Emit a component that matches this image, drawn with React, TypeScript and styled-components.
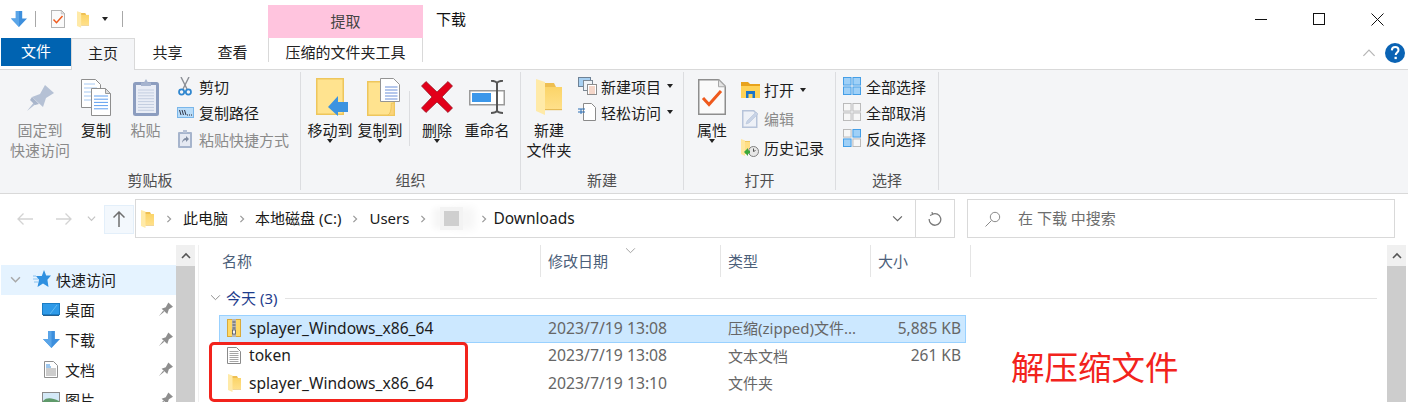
import React from 'react'
import styled, { createGlobalStyle } from 'styled-components'

const GlobalStyle = createGlobalStyle`
  html, body { margin: 0; padding: 0; background: #fff; }
  body {
    font-family: "Noto Sans", "Noto Sans CJK SC", sans-serif;
    font-size: 15px;
    color: #1c1c1c;
  }
  * { box-sizing: border-box; }
`

const Page = styled.div`
  position: relative;
  width: 1408px;
  height: 402px;
  overflow: hidden;
  background: #fff;
`

/* ---------- title bar ---------- */
const TitleBar = styled.div`
  display: flex;
  height: 38px;
  align-items: center;
`
const QuickAccess = styled.div`
  display: flex;
  align-items: center;
  width: 268px;
  padding-left: 11px;
  height: 100%;
`
const QuickSep = styled.span<{ $left: number; $right: number }>`
  width: 1px;
  height: 16px;
  margin: 0 ${p => p.$right}px 0 ${p => p.$left}px;
  background: #a8a8a8;
`
const QuickSlot = styled.span<{ $left: number }>`
  display: flex;
  margin-left: ${p => p.$left}px;
`
const ExtractTab = styled.div`
  align-self: flex-end;
  width: 155px;
  height: 33px;
  background: #ffc4de;
  color: #444;
  text-align: center;
  line-height: 32px;
`
const WindowTitle = styled.div`
  margin-left: 13px;
  line-height: 36px;
  color: #111;
`
const WindowButtons = styled.div`
  display: flex;
  margin-left: auto;
  padding-right: 24px;
  gap: 46px;
  align-items: center;
`

/* ---------- tabs ---------- */
const TabRow = styled.div`
  display: flex;
  height: 32px;
  border-bottom: 1px solid #d9d9d9;
  align-items: flex-start;
`
const FileTab = styled.div`
  width: 70px;
  height: 28px;
  margin-left: 1px;
  background: #0063b1;
  color: #fff;
  text-align: center;
  line-height: 26px;
`
const Tab = styled.div<{ $active?: boolean }>`
  width: ${p => (p.$active ? 64 : 65)}px;
  height: ${p => (p.$active ? 32 : 30)}px;
  line-height: 28px;
  text-align: center;
  color: #222;
  ${p =>
    p.$active &&
    `background: #f4f5f7;
     border: 1px solid #d9d9d9;
     border-bottom: none;
     position: relative;`}
`
const ContextTab = styled.div`
  width: 155px;
  height: 24px;
  margin-left: 3px;
  border-left: 1px solid #d9d9d9;
  border-right: 1px solid #d9d9d9;
  line-height: 28px;
  text-align: center;
  color: #222;
  white-space: nowrap;
`
const RibbonTools = styled.div`
  display: flex;
  align-items: center;
  margin-left: auto;
  height: 100%;
  gap: 9px;
  padding: 0 3px 2px 0;
`

/* ---------- ribbon ---------- */
const Ribbon = styled.div`
  display: flex;
  height: 124px;
  padding: 2px 0 3px;
  background: #f4f5f7;
  border-bottom: 1px solid #d9d9d9;
`
const Group = styled.section<{ $w: number }>`
  display: flex;
  flex-direction: column;
  width: ${p => p.$w}px;
  border-right: 1px solid #dcdde0;
`
const GroupBody = styled.div<{ $pad?: number }>`
  display: flex;
  flex: 1;
  align-items: flex-start;
  padding-left: ${p => p.$pad || 0}px;
`
const GroupLabel = styled.div`
  height: 23px;
  padding-top: 3px;
  line-height: 20px;
  text-align: center;
  color: #4f4f4f;
`
const LargeButton = styled.div<{ $w: number; $off?: boolean }>`
  display: flex;
  flex-direction: column;
  align-items: center;
  width: ${p => p.$w}px;
  color: ${p => (p.$off ? '#8a8a8a' : '#1c1c1c')};
  text-align: center;
`
const LargeIcon = styled.div<{ $shift?: number }>`
  display: flex;
  align-items: center;
  justify-content: center;
  height: 38px;
  margin: 6px 0 4px ${p => p.$shift || 0}px;
`
const LargeText = styled.div`
  line-height: 20px;
  white-space: nowrap;
`
const Caret = styled.span<{ $inline?: boolean }>`
  display: block;
  width: 0;
  height: 0;
  border: 3.5px solid transparent;
  border-top: 4px solid #222;
  border-bottom: none;
  margin: ${p => (p.$inline ? '0 0 0 2px' : '-1px 0 0')};
`
const GroupDivider = styled.span`
  width: 1px;
  height: 55px;
  margin: 19px 2px 0 4px;
  background: #dcdde0;
`
const SmallColumn = styled.div<{ $rowH: number; $top: number }>`
  display: grid;
  grid-auto-rows: ${p => p.$rowH}px;
  padding-top: ${p => p.$top}px;
`
const SmallRow = styled.div<{ $off?: boolean }>`
  display: flex;
  align-items: center;
  gap: 4px;
  color: ${p => (p.$off ? '#8a8a8a' : '#1c1c1c')};
  white-space: nowrap;
`
const SmallIcon = styled.span`
  display: flex;
  width: 20px;
  justify-content: center;
  align-items: center;
`

/* ---------- address bar ---------- */
const AddressRow = styled.div`
  display: flex;
  height: 51px;
  padding-top: 5px;
  align-items: flex-start;
`
const NavArrows = styled.div`
  display: flex;
  align-items: center;
  width: 135px;
  height: 39px;
`
const NavSlot = styled.span<{ $w: number }>`
  display: flex;
  justify-content: center;
  width: ${p => p.$w}px;
`
const UpButton = styled.span`
  display: flex;
  align-items: center;
  justify-content: center;
  width: 30px;
  height: 29px;
  margin-top: 1px;
  background: #f3f8fd;
  border: 1px solid #e3effa;
`
const AddressBox = styled.div`
  display: flex;
  align-items: center;
  width: 820px;
  height: 39px;
  border: 1px solid #d9d9d9;
  padding-left: 5px;
`
const Crumb = styled.span<{ $big?: boolean }>`
  margin-top: -2px;
  color: #1a1a1a;
  white-space: pre;
  ${p => p.$big && 'font-size: 15.5px;'}
`
const CrumbSep = styled.span<{ $w: number }>`
  display: flex;
  justify-content: center;
  width: ${p => p.$w}px;
`
const Redacted = styled.span`
  display: block;
  width: 15px;
  height: 15px;
  margin: 0 15px 0 8px;
  background: #cfcfcf;
  box-shadow: 0 0 0 4px #f3f3f3, 12px 0 8px 4px #f6f6f6, -8px 0 6px 3px #f6f6f6;
`
const AddressTail = styled.div`
  display: flex;
  align-items: center;
  margin-left: auto;
  height: 100%;
`
const RefreshSlot = styled.span`
  display: flex;
  align-items: center;
  justify-content: center;
  width: 39px;
  height: 100%;
  margin-left: 12px;
  border-left: 1px solid #d9d9d9;
`
const SearchBox = styled.div`
  display: flex;
  align-items: center;
  width: 428px;
  height: 39px;
  margin-left: 12px;
  padding-left: 17px;
  gap: 17px;
  border: 1px solid #d9d9d9;
  & > span:last-child {
    color: #6d6d6d;
  }
`

/* ---------- body ---------- */
const Body = styled.div`
  display: flex;
  height: 157px;
  overflow: hidden;
`
const Nav = styled.nav`
  width: 176px;
  padding: 20px 0 0 1px;
`
const NavRow = styled.div<{ $active?: boolean }>`
  display: flex;
  align-items: center;
  height: 30px;
  padding: 0 0 2px ${p => (p.$active ? 8 : 41)}px;
  background: ${p => (p.$active ? '#e5f3ff' : 'transparent')};
  color: #1c1c1c;
`
const NavIcon = styled.span<{ $w: number; $gap: number }>`
  display: flex;
  justify-content: center;
  width: ${p => p.$w}px;
  margin-right: ${p => p.$gap}px;
`
const PinSlot = styled.span`
  display: flex;
  margin-left: auto;
  margin-right: 3px;
`
const Scrollbar = styled.div<{ $right?: number }>`
  display: flex;
  flex-direction: column;
  width: 19px;
  margin-right: ${p => p.$right || 0}px;
  background: #cdcdcd;
`
const ScrollButton = styled.div`
  display: flex;
  height: 21px;
  align-items: center;
  justify-content: center;
  background: #f0f0f0;
`
const Main = styled.main`
  flex: 1;
  margin: 0 0 0 3px;
  border-left: 1px solid #f0f0f0;
`
const FileHead = styled.div`
  position: relative;
  display: grid;
  grid-template-columns: 342px 180px 150px 100px;
  width: 772px;
  height: 32px;
`
const HeadCell = styled.div<{ $pad: number }>`
  padding-left: ${p => p.$pad}px;
  line-height: 32px;
  color: #4c607a;
  border-right: 1px solid #e5e5e5;
`
const SortMark = styled.span`
  position: absolute;
  left: 426px;
  top: 0;
  display: flex;
`
const FileGroup = styled.div`
  display: flex;
  align-items: center;
  height: 24px;
  margin: 8px 10px 6px 0;
  padding-left: 11px;
  color: #1e3c8c;
`
const GroupName = styled.span`
  margin: 0 8px 0 5px;
  white-space: nowrap;
`
const GroupLine = styled.span`
  flex: 1;
  height: 1px;
  margin-top: 2px;
  background: #e3e3e3;
`
const FileRow = styled.div<{ $selected?: boolean }>`
  display: grid;
  grid-template-columns: 321px 180px 150px 90px;
  align-items: center;
  width: 747px;
  height: 27.5px;
  margin-left: 20px;
  padding-bottom: 2px;
  border: 1px solid ${p => (p.$selected ? '#99d1ff' : 'transparent')};
  background: ${p => (p.$selected ? '#cce8ff' : 'transparent')};
  color: #666;
  white-space: nowrap;
`
const NameCell = styled.div`
  display: flex;
  align-items: center;
  color: #1c1c1c;
  font-size: 15.6px;
`
const FileIcon = styled.span`
  display: flex;
  justify-content: center;
  width: 14px;
  margin: 0 8px 0 7px;
`
const InfoCell = styled.div<{ $big?: boolean }>`
  padding-left: 7px;
  ${p => p.$big && 'font-size: 15.75px;'}
`
const SizeCell = styled.div`
  font-size: 15.5px;
  text-align: right;
`

/* ---------- screenshot annotation ---------- */
const RedFrame = styled.div`
  position: absolute;
  left: 209px;
  top: 342px;
  width: 259px;
  height: 60px;
  border: 3px solid #f2231c;
  border-radius: 5px;
`
const RedNote = styled.div`
  position: absolute;
  left: 1011px;
  top: 343px;
  font-size: 33.5px;
  line-height: 48px;
  color: #f2231c;
  white-space: nowrap;
`

/* ---------- icons ---------- */
const Chevron = ({ dir = 'right', size = 8, color = '#9a9a9a', width = 1.2 }: { dir?: 'right' | 'down' | 'up'; size?: number; color?: string; width?: number }) => {
  const d = dir === 'right' ? 'M3 1l4 4-4 4' : dir === 'down' ? 'M1 3l4 4 4-4' : 'M1 7l4-4 4 4'
  return (
    <svg width={size} height={size} viewBox="0 0 10 10">
      <path d={d} fill="none" stroke={color} strokeWidth={(width * 10) / size} />
    </svg>
  )
}

const DownArrow = ({ size = 16 }: { size?: number }) => (
  <svg width={size} height={size} viewBox="0 0 16 16">
    <path d="M4.8 0h6.4v7.5H16L8 16 0 7.5h4.8z" fill="#3d8fdd" />
    <path d="M4.8 0h3.2v16L0 7.5h4.8z" fill="#5aa5e8" />
  </svg>
)

const Folder = ({ w = 13, h = 18 }: { w?: number; h?: number }) => (
  <svg width={w} height={h} viewBox="0 0 13 18">
    <defs>
      <linearGradient id="folderFront" x1="0" y1="0" x2="0" y2="1">
        <stop offset="0" stopColor="#fbd468" />
        <stop offset="1" stopColor="#ffe08a" />
      </linearGradient>
    </defs>
    <path d="M3 2h6l1 2v11H3z" fill="#eebf52" />
    <path d="M4 4h9v11H4z" fill="url(#folderFront)" />
    <path d="M0 0l4.5 1.5V18L0 16z" fill="#ffeaa8" />
    <path d="M4.5 15H13v.6H4.5z" fill="#e6bb56" />
  </svg>
)

const CheckDoc = ({ w = 14, h = 18 }: { w?: number; h?: number }) => (
  <svg width={w} height={h} viewBox="0 0 28 36">
    <path d="M.75.75h20l6.5 6.5v28H.75z" fill="#fafafa" stroke="#8e8e8e" strokeWidth="1.5" />
    <path d="M20.5.75v7h7z" fill="#e4e4e4" stroke="#a8a8a8" />
    <path d="M5 19l6 6.5L23 12" fill="none" stroke="#ef5a1d" strokeWidth="3" />
  </svg>
)

const Pin = () => (
  <svg width="27" height="27" viewBox="0 0 27 27">
    <path d="M0 27l8-10 2 2zM5 13l8-3 5-9 9 8-8 5-3 9z" fill="#b5c1d5" />
    <path d="M5 13l5 5 2 2-4 1-5-5z" fill="#a9b6cc" />
  </svg>
)

const lines = (x: number, y0: number, w: number, n: number, step: number) =>
  Array.from({ length: n }, (_, i) => `M${x} ${y0 + i * step}h${w}`).join('')

const CopyIcon = () => (
  <svg width="30" height="37" viewBox="0 0 30 37">
    <path d="M.5.5h14l5 5v23H.5z" fill="#fff" stroke="#8e8e8e" />
    <path d="M3 5h11M3 9h13M3 13h13M3 17h13M3 21h13" stroke="#a5c8f2" />
    <path d="M10.5 9.5h14l5 5v22h-19z" fill="#fff" stroke="#8e8e8e" />
    <path d="M24.5 9.5v5h5z" fill="#ddd" stroke="#9a9a9a" />
    <path d={lines(13, 17, 14, 5, 3.2)} stroke="#5f9ff0" />
  </svg>
)

const PasteIcon = () => (
  <svg width="26" height="37" viewBox="0 0 26 37">
    <rect y="3" width="26" height="34" rx="2.5" fill="#8c9dbf" />
    <rect x="3" y="6" width="20" height="28" fill="#e9edf6" />
    <path d={lines(5, 11, 16, 8, 2.9)} stroke="#c4cee0" />
    <path d="M8 7V3.5h3L13 0l2 3.5h3V7z" fill="#a6b4cf" />
  </svg>
)

const Scissors = () => (
  <svg width="14" height="19" viewBox="0 0 14 19">
    <path d="M3 0l6 12M11 0L5 12" stroke="#8b8f96" strokeWidth="1.4" fill="none" />
    <circle cx="3.6" cy="15" r="2.6" fill="none" stroke="#2f86cf" strokeWidth="1.7" />
    <circle cx="10.4" cy="15" r="2.6" fill="none" stroke="#2f86cf" strokeWidth="1.7" />
  </svg>
)

const PathIcon = () => (
  <svg width="17" height="11" viewBox="0 0 17 11">
    <rect x=".5" y=".5" width="16" height="10" fill="#b9dcf8" stroke="#79b6ea" />
    <path d="M2.5 3l1.5 5M5 3l1.5 5M7.500 3l1.500 5" stroke="#223" strokeWidth=".9" />
    <path d="M10 8h1M12 8h1M14 8h1" stroke="#223" />
  </svg>
)

const ShortcutIcon = () => (
  <svg width="14" height="18" viewBox="0 0 14 18">
    <rect y="2" width="14" height="16" rx="1" fill="#a6b4cc" />
    <rect x="2" y="4" width="10" height="12" fill="#e5e9f2" />
    <path d="M5 0h4v3H5z" fill="#b7c2d6" />
    <path d="M4 13c0-3 2-5 4-5V6l3 3-3 3v-2c-2 0-3 1-4 3z" fill="#7f8ba1" />
  </svg>
)

const MoveToIcon = () => (
  <svg width="33" height="38" viewBox="0 0 33 38">
    <path d="M.75.75h26.5v35.5H.75z" fill="#ffe38f" stroke="#eec65c" strokeWidth="1.5" />
    <path d="M12 29l10-11v6h10v10H22v4z" fill="#3c93e0" />
  </svg>
)

const CopyToIcon = () => (
  <svg width="33" height="38" viewBox="0 0 33 38">
    <path d="M.75 3.750h26.500v33.500H.75z" fill="#ffe38f" stroke="#eec65c" strokeWidth="1.500" />
    <path d="M27.250 25v12.250h-6.500c3.500-2 3.500-8 3.500-12z" fill="#fbd37a" stroke="#eec65c" />
    <path d="M13.500.5h13l6 6v17h-19z" fill="#fff" stroke="#949494" />
    <path d="M18 8.500h12.500v14H18z" fill="#fff" />
    <path d={lines(18, 9, 12.500, 5, 3)} stroke="#6a8fd8" />
  </svg>
)

const DeleteIcon = () => (
  <svg width="32" height="32" viewBox="0 0 32 32">
    <path d="M5 .5L16 11 27 .5 31.500 5 21 16l10.500 11-4.500 4.500L16 21 5 31.500.5 27 11 16 .5 5z" fill="#e2001a" stroke="#8d1320" strokeWidth=".7" />
  </svg>
)

const RenameIcon = () => (
  <svg width="36" height="34" viewBox="0 0 36 34">
    <path d="M.75 10.750h34.500v14H.75z" fill="#fff" stroke="#9a9a9a" strokeWidth="1.500" />
    <rect x="3" y="13" width="19" height="9" fill="#3b97ea" />
    <path d="M28 2v30M22 .8c3 0 5 .5 6 2.200 1-1.700 3-2.200 6-2.200M22 33c3 0 5-.5 6-2.200 1 1.700 3 2.200 6 2.200" fill="none" stroke="#555" strokeWidth="2" />
  </svg>
)

const NewItemIcon = () => (
  <svg width="19" height="18" viewBox="0 0 19 18">
    <rect x=".5" y=".5" width="12" height="9" fill="#a7d0f2" stroke="#6e8296" />
    <rect x="5.500" y="3.500" width="9" height="10" fill="#eef3f8" stroke="#7d8a96" />
    <rect x="9.500" y="7.500" width="9" height="10" fill="#fff" stroke="#8d8d8d" />
    <path d="M11 10h6M11 12h6M11 14h6M11 16h6" stroke="#e39a7a" strokeWidth=".8" />
  </svg>
)

const EasyAccessIcon = () => (
  <svg width="18" height="18" viewBox="0 0 18 18">
    <path d="M5.500.5h8l4 4v13h-12z" fill="#fff" stroke="#8a8a8a" />
    <path d="M0 6h7M0 9h7M3 6v5" stroke="#2a6fb5" />
  </svg>
)

const OpenIcon = () => (
  <svg width="19" height="16" viewBox="0 0 19 16">
    <path d="M0 2V0h7l2 2h10v4H0z" fill="#e8a21c" />
    <path d="M0 4h19v12H0z" fill="#ffd257" />
    <path d="M5 16V9h9v7h-2.500v-4h-4v4z" fill="#1c75c9" />
  </svg>
)

const EditIcon = () => (
  <svg width="17" height="18" viewBox="0 0 17 18">
    <path d="M.75.75h11l3 3v13.500h-14z" fill="#eef1f7" stroke="#b7c4da" strokeWidth="1.500" />
    <path d="M4 14l1-3 9-9 2 2-9 9z" fill="#c8d3e6" stroke="#b7c4da" strokeWidth=".6" />
  </svg>
)

const HistoryIcon = () => (
  <svg width="18" height="18" viewBox="0 0 18 18">
    <path d="M3 2h6v13H3z" fill="#f0c75e" />
    <path d="M0 0l4 1.500V17l-4-2z" fill="#ffe79f" />
    <path d="M4 3h5v11H4z" fill="#ffdf85" />
    <circle cx="12.500" cy="12.500" r="5" fill="#e7e7e7" stroke="#7f7f7f" />
    <path d="M12.500 9.500v3l2-1" stroke="#555" fill="none" />
    <path d="M3 13l4-4v2.500h2v3H7V17z" fill="#39a83b" />
  </svg>
)

const SelectGrid = ({ on }: { on: boolean[] }) => {
  const pos: [number, number][] = [[0.5, 0.5], [10.5, 0.5], [0.5, 10.5], [10.5, 10.5]]
  return (
    <svg width="18" height="18" viewBox="0 0 19 19">
      {pos.map(([x, y], i) => (
        <rect key={i} x={x} y={y} width="8" height="8" fill={on[i] ? '#9fd0f7' : '#f7f7f7'} stroke={on[i] ? '#3f9be6' : '#b8b8b8'} />
      ))}
    </svg>
  )
}

const StarIcon = () => (
  <svg width="18" height="18" viewBox="0 0 18 18">
    <path d="M11 0l2.200 5.500H18l-3.600 4.300 1.100 7.200-5.500-3.500L4.500 17 6 9.800 3 6h5.800z" fill="#2f90e0" />
    <path d="M0 6h3M0 9h5M1 12h4" stroke="#8ac2ef" />
  </svg>
)

const DesktopIcon = () => (
  <svg width="18" height="13" viewBox="0 0 18 13">
    <rect x=".5" y=".5" width="17" height="11" fill="#2f9ae8" stroke="#1a7cc4" />
    <path d="M8 11l7-9" stroke="#64bbf2" />
    <path d="M1 12.500h16" stroke="#275f8f" />
  </svg>
)

const DocsIcon = () => (
  <svg width="14" height="17" viewBox="0 0 14 17">
    <path d="M.5.5h9l4 4v12H.5z" fill="#fff" stroke="#8f8f8f" />
    <path d="M2 4h4M2 6h5" stroke="#3d8fdd" />
    <path d={lines(2, 8, 10, 4, 2)} stroke="#9a9a9a" />
  </svg>
)

const PictureIcon = () => (
  <svg width="18" height="14" viewBox="0 0 18 14">
    <rect x=".5" y=".5" width="17" height="13" fill="#d4e9f7" stroke="#8a8a8a" />
    <path d="M1 9c4-4 9-3 16 0v4H1z" fill="#5f9a6a" />
  </svg>
)

const PinSmall = () => (
  <svg width="14" height="14" viewBox="0 0 27 27">
    <path d="M0 27l8-10 2 2zM5 13l8-3 5-9 9 8-8 5-3 9z" fill="#8e8e8e" />
  </svg>
)

const ZipIcon = () => (
  <svg width="14" height="18" viewBox="0 0 14 18">
    <rect x=".5" y=".5" width="13" height="17" fill="#ffd964" stroke="#d9a93a" />
    <rect x="5" y="0" width="4" height="18" fill="#b7b7b7" />
    <path d="M5.500 3h3M5.500 6h3M5.500 9h3" stroke="#555" />
    <rect x="5.500" y="11" width="3" height="4" fill="#f5f5f5" stroke="#555" strokeWidth=".8" />
  </svg>
)

const TextIcon = () => (
  <svg width="14" height="17" viewBox="0 0 14 17">
    <path d="M.5.5h9l4 4v12H.5z" fill="#fff" stroke="#8a8a8a" />
    <path d={lines(2.5, 4.5, 9, 6, 2)} stroke="#8f8f8f" strokeWidth=".8" />
  </svg>
)

const HorizontalArrow = ({ right }: { right?: boolean }) => (
  <svg width="16" height="12" viewBox="0 0 16 12">
    <path
      d={right ? 'M15 6H0M9.500.5L15 6l-5.500 5.500' : 'M1 6h15M6.500.5L1 6l5.500 5.500'}
      fill="none"
      stroke="#d3d3d3"
      strokeWidth="1.300"
    />
  </svg>
)

const UpArrow = () => (
  <svg width="12" height="16" viewBox="0 0 12 16">
    <path d="M6 16V1M.5 6.500L6 1l5.500 5.500" fill="none" stroke="#6f6f6f" strokeWidth="1.500" />
  </svg>
)

const Refresh = () => (
  <svg width="14" height="14" viewBox="0 0 14 14">
    <path d="M4.500 2.200A5.800 5.800 0 1 1 1.200 7" fill="none" stroke="#7a7a7a" strokeWidth="1.300" />
    <path d="M4 0l.5 2.500L2 3.500" fill="none" stroke="#7a7a7a" strokeWidth="1.200" />
  </svg>
)

const SearchIcon = () => (
  <svg width="16" height="16" viewBox="0 0 16 16">
    <circle cx="10" cy="6" r="4.700" fill="none" stroke="#8a8a8a" />
    <path d="M6.500 9.500L.5 15.500" stroke="#8a8a8a" />
  </svg>
)

const HelpIcon = () => (
  <svg width="20" height="20" viewBox="0 0 20 20">
    <circle cx="10" cy="10" r="10" fill="#0a63b4" />
    <path d="M6.800 7.300C7 5 8.500 4 10.200 4c2 0 3.300 1.200 3.300 2.900 0 2.400-2.800 2.600-2.800 5" fill="none" stroke="#fff" strokeWidth="2" />
    <rect x="9.500" y="13.800" width="2.300" height="2.300" fill="#fff" />
  </svg>
)

const MinIcon = () => (
  <svg width="12" height="12" viewBox="0 0 12 12"><path d="M0 6.500h12" stroke="#111" /></svg>
)
const MaxIcon = () => (
  <svg width="12" height="12" viewBox="0 0 12 12"><rect x=".5" y=".5" width="11" height="11" fill="none" stroke="#111" /></svg>
)
const CloseIcon = () => (
  <svg width="13" height="13" viewBox="0 0 13 13"><path d="M.5.500l12 12M12.500.500l-12 12" stroke="#111" /></svg>
)

const files = [
  { icon: <ZipIcon />, name: 'splayer_Windows_x86_64', date: '2023/7/19 13:08', type: '压缩(zipped)文件...', size: '5,885 KB', selected: true },
  { icon: <TextIcon />, name: 'token', date: '2023/7/19 13:08', type: '文本文档', size: '261 KB' },
  { icon: <Folder />, name: 'splayer_Windows_x86_64', date: '2023/7/19 13:10', type: '文件夹', size: '' },
]

const navItems = [
  { icon: <DesktopIcon />, label: '桌面' },
  { icon: <DownArrow size={17} />, label: '下载' },
  { icon: <DocsIcon />, label: '文档' },
  { icon: <PictureIcon />, label: '图片' },
]

const App = () => (
  <Page>
    <GlobalStyle />
    <TitleBar>
      <QuickAccess>
        <DownArrow />
        <QuickSep $left={8} $right={15} />
        <CheckDoc />
        <QuickSlot $left={12}><Folder w={12} h={17} /></QuickSlot>
        <QuickSlot $left={13}><Caret /></QuickSlot>
        <QuickSep $left={14} $right={0} />
      </QuickAccess>
      <ExtractTab>提取</ExtractTab>
      <WindowTitle>下载</WindowTitle>
      <WindowButtons>
        <MinIcon />
        <MaxIcon />
        <CloseIcon />
      </WindowButtons>
    </TitleBar>

    <TabRow>
      <FileTab>文件</FileTab>
      <Tab $active>主页</Tab>
      <Tab>共享</Tab>
      <Tab>查看</Tab>
      <ContextTab>压缩的文件夹工具</ContextTab>
      <RibbonTools>
        <Chevron dir="up" size={14} color="#b5b5b5" width={1.2} />
        <HelpIcon />
      </RibbonTools>
    </TabRow>

    <Ribbon>
      <Group $w={301}>
        <GroupBody $pad={4}>
          <LargeButton $w={72} $off>
            <LargeIcon><Pin /></LargeIcon>
            <LargeText>固定到<br />快速访问</LargeText>
          </LargeButton>
          <LargeButton $w={40}>
            <LargeIcon><CopyIcon /></LargeIcon>
            <LargeText>复制</LargeText>
          </LargeButton>
          <LargeButton $w={59} $off>
            <LargeIcon><PasteIcon /></LargeIcon>
            <LargeText>粘贴</LargeText>
          </LargeButton>
          <SmallColumn $rowH={26.5} $top={1}>
            <SmallRow><SmallIcon><Scissors /></SmallIcon>剪切</SmallRow>
            <SmallRow><SmallIcon><PathIcon /></SmallIcon>复制路径</SmallRow>
            <SmallRow $off><SmallIcon><ShortcutIcon /></SmallIcon>粘贴快捷方式</SmallRow>
          </SmallColumn>
        </GroupBody>
        <GroupLabel>剪贴板</GroupLabel>
      </Group>

      <Group $w={220}>
        <GroupBody $pad={4}>
          <LargeButton $w={50}>
            <LargeIcon $shift={4}><MoveToIcon /></LargeIcon>
            <LargeText>移动到</LargeText>
            <Caret />
          </LargeButton>
          <LargeButton $w={50}>
            <LargeIcon $shift={6}><CopyToIcon /></LargeIcon>
            <LargeText>复制到</LargeText>
            <Caret />
          </LargeButton>
          <GroupDivider />
          <LargeButton $w={50}>
            <LargeIcon><DeleteIcon /></LargeIcon>
            <LargeText>删除</LargeText>
            <Caret />
          </LargeButton>
          <LargeButton $w={50}>
            <LargeIcon><RenameIcon /></LargeIcon>
            <LargeText>重命名</LargeText>
          </LargeButton>
        </GroupBody>
        <GroupLabel>组织</GroupLabel>
      </Group>

      <Group $w={163}>
        <GroupBody>
          <LargeButton $w={56}>
            <LargeIcon><Folder w={26} h={36} /></LargeIcon>
            <LargeText>新建<br />文件夹</LargeText>
          </LargeButton>
          <SmallColumn $rowH={26} $top={1}>
            <SmallRow><SmallIcon><NewItemIcon /></SmallIcon>新建项目<Caret $inline /></SmallRow>
            <SmallRow><SmallIcon><EasyAccessIcon /></SmallIcon>轻松访问<Caret $inline /></SmallRow>
          </SmallColumn>
        </GroupBody>
        <GroupLabel>新建</GroupLabel>
      </Group>

      <Group $w={152}>
        <GroupBody>
          <LargeButton $w={56}>
            <LargeIcon><CheckDoc w={28} h={36} /></LargeIcon>
            <LargeText>属性</LargeText>
            <Caret />
          </LargeButton>
          <SmallColumn $rowH={29} $top={3}>
            <SmallRow><SmallIcon><OpenIcon /></SmallIcon>打开<Caret $inline /></SmallRow>
            <SmallRow $off><SmallIcon><EditIcon /></SmallIcon>编辑</SmallRow>
            <SmallRow><SmallIcon><HistoryIcon /></SmallIcon>历史记录</SmallRow>
          </SmallColumn>
        </GroupBody>
        <GroupLabel>打开</GroupLabel>
      </Group>

      <Group $w={103}>
        <GroupBody $pad={6}>
          <SmallColumn $rowH={26} $top={1}>
            <SmallRow><SmallIcon><SelectGrid on={[true, true, true, true]} /></SmallIcon>全部选择</SmallRow>
            <SmallRow><SmallIcon><SelectGrid on={[false, false, false, false]} /></SmallIcon>全部取消</SmallRow>
            <SmallRow><SmallIcon><SelectGrid on={[false, true, true, false]} /></SmallIcon>反向选择</SmallRow>
          </SmallColumn>
        </GroupBody>
        <GroupLabel>选择</GroupLabel>
      </Group>
    </Ribbon>

    <AddressRow>
      <NavArrows>
        <NavSlot $w={50}><HorizontalArrow /></NavSlot>
        <NavSlot $w={28}><HorizontalArrow right /></NavSlot>
        <NavSlot $w={26}><Chevron dir="down" size={9} color="#c4c4c4" /></NavSlot>
        <UpButton><UpArrow /></UpButton>
      </NavArrows>
      <AddressBox>
        <Folder w={13} h={18} />
        <CrumbSep $w={29}><Chevron /></CrumbSep>
        <Crumb>此电脑</Crumb>
        <CrumbSep $w={27}><Chevron /></CrumbSep>
        <Crumb>本地磁盘 (C:)</Crumb>
        <CrumbSep $w={28}><Chevron /></CrumbSep>
        <Crumb>Users</Crumb>
        <CrumbSep $w={27}><Chevron /></CrumbSep>
        <Redacted />
        <CrumbSep $w={19}><Chevron /></CrumbSep>
        <Crumb $big>Downloads</Crumb>
        <AddressTail>
          <Chevron dir="down" size={11} color="#666" />
          <RefreshSlot><Refresh /></RefreshSlot>
        </AddressTail>
      </AddressBox>
      <SearchBox>
        <SearchIcon />
        <Crumb>在 下载 中搜索</Crumb>
      </SearchBox>
    </AddressRow>

    <Body>
      <Nav>
        <NavRow $active>
          <NavIcon $w={12} $gap={12}><Chevron dir="down" size={11} color="#a8a8a8" width={1.5} /></NavIcon>
          <NavIcon $w={18} $gap={5}><StarIcon /></NavIcon>
          快速访问
        </NavRow>
        {navItems.map(item => (
          <NavRow key={item.label}>
            <NavIcon $w={18} $gap={5}>{item.icon}</NavIcon>
            {item.label}
            <PinSlot><PinSmall /></PinSlot>
          </NavRow>
        ))}
      </Nav>
      <Scrollbar>
        <ScrollButton><Chevron dir="up" size={10} color="#555" width={1.6} /></ScrollButton>
      </Scrollbar>
      <Main>
        <FileHead>
          <HeadCell $pad={23}>名称</HeadCell>
          <HeadCell $pad={7}>修改日期</HeadCell>
          <HeadCell $pad={7}>类型</HeadCell>
          <HeadCell $pad={7}>大小</HeadCell>
          <SortMark><Chevron dir="down" size={11} color="#9a9a9a" width={0.9} /></SortMark>
        </FileHead>
        <FileGroup>
          <Chevron dir="down" size={11} color="#8f8f8f" width={1} />
          <GroupName>今天 (3)</GroupName>
          <GroupLine />
        </FileGroup>
        {files.map(f => (
          <FileRow key={f.date + f.name} $selected={f.selected}>
            <NameCell><FileIcon>{f.icon}</FileIcon>{f.name}</NameCell>
            <InfoCell $big>{f.date}</InfoCell>
            <InfoCell>{f.type}</InfoCell>
            <SizeCell>{f.size}</SizeCell>
          </FileRow>
        ))}
      </Main>
      <Scrollbar $right={2}>
        <ScrollButton><Chevron dir="up" size={10} color="#555" width={1.6} /></ScrollButton>
      </Scrollbar>
    </Body>

    <RedFrame />
    <RedNote>解压缩文件</RedNote>
  </Page>
)

export default App
